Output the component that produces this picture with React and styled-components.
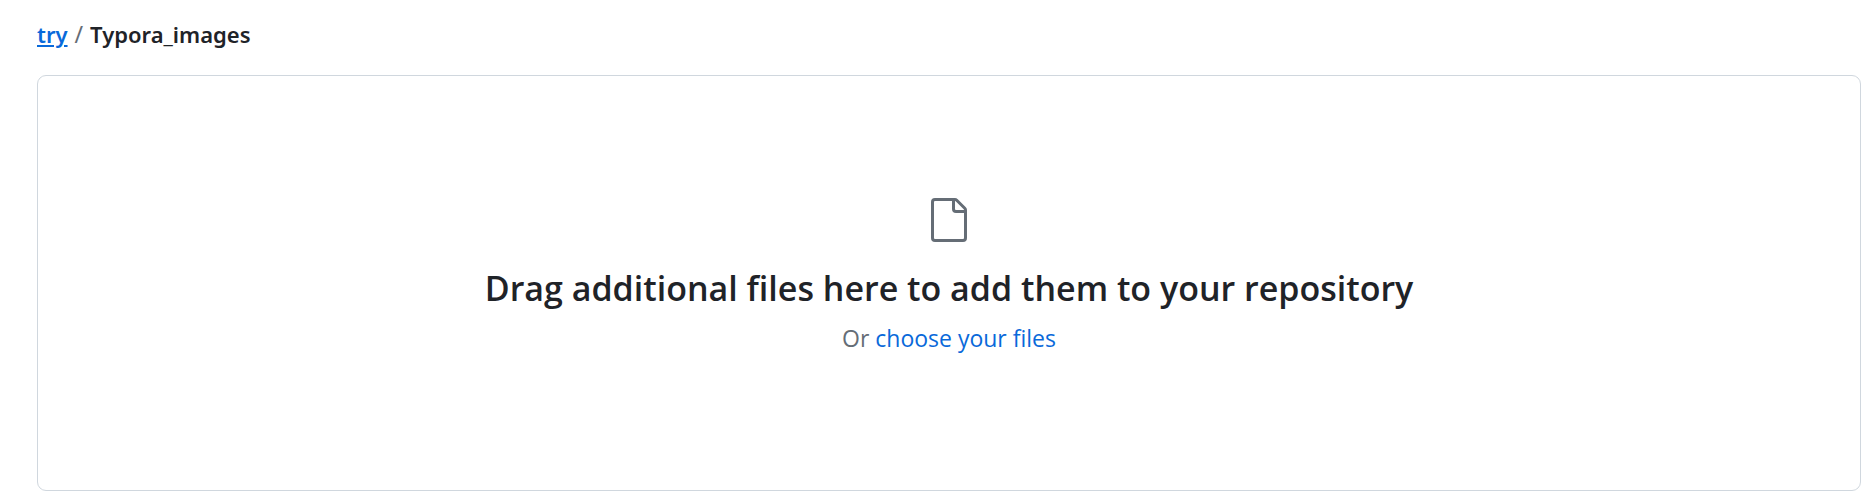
import React from "react";
import styled, { createGlobalStyle } from "styled-components";

const GlobalStyle = createGlobalStyle`
  *, *::before, *::after { box-sizing: border-box; }
  body {
    margin: 0;
    background: #ffffff;
    color: #1f2328;
    font-family: "Segoe UI", "Open Sans", "Noto Sans", sans-serif;
    font-size: 23px;
    line-height: 32px;
  }
`;

const Page = styled.main`
  display: flex;
  flex-direction: column;
  gap: 25px;
  padding: 18px 12px 10px 37px;
`;

const Breadcrumb = styled.nav`
  display: flex;
  align-items: baseline;
  gap: 7px;
  font-family: "Segoe UI", "Noto Sans", "Open Sans", sans-serif;
  font-size: 22px;
  font-weight: 600;
`;

const Link = styled.a`
  color: #0969da;
  text-decoration: ${({ $underlined }) => ($underlined ? "underline" : "none")};
  text-decoration-thickness: 2px;
  text-underline-offset: 2px;
`;

const Separator = styled.span`
  color: #656d76;
  font-size: 23px;
  font-weight: 400;
`;

const DropZone = styled.section`
  display: flex;
  flex-direction: column;
  align-items: center;
  padding: 120px 24px 136px;
  border: 1px solid #d0d7de;
  border-radius: 9px;
  text-align: center;
`;

const FileIcon = styled.svg`
  width: 48px;
  height: 48px;
  fill: #656d76;
`;

const Title = styled.h1`
  margin: 17px 0 7px;
  font-size: 34px;
  font-weight: 600;
  line-height: 54px;
`;

const Hint = styled.p`
  margin: 0;
  color: #656d76;
  line-height: 32px;
`;

export default function App() {
  return (
    <>
      <GlobalStyle />
      <Page>
        <Breadcrumb aria-label="Path">
          <Link href="#try" $underlined>try</Link>
          <Separator>/</Separator>
          <span>Typora_images</span>
        </Breadcrumb>
        <DropZone>
          <FileIcon viewBox="0 0 24 24" aria-hidden="true">
            <path d="M3 3a2 2 0 0 1 2-2h9.982a2 2 0 0 1 1.414.586l4.018 4.018A2 2 0 0 1 21 7.018V21a2 2 0 0 1-2 2H5a2 2 0 0 1-2-2Zm2-.5a.5.5 0 0 0-.5.5v18a.5.5 0 0 0 .5.5h14a.5.5 0 0 0 .5-.5V8.5h-4a2 2 0 0 1-2-2v-4Zm10 0v4a.5.5 0 0 0 .5.5h4a.5.5 0 0 0-.146-.336l-4.018-4.018A.5.5 0 0 0 15 2.5Z" />
          </FileIcon>
          <Title>Drag additional files here to add them to your repository</Title>
          <Hint>
            Or <Link href="#choose">choose your files</Link>
          </Hint>
        </DropZone>
      </Page>
    </>
  );
}
